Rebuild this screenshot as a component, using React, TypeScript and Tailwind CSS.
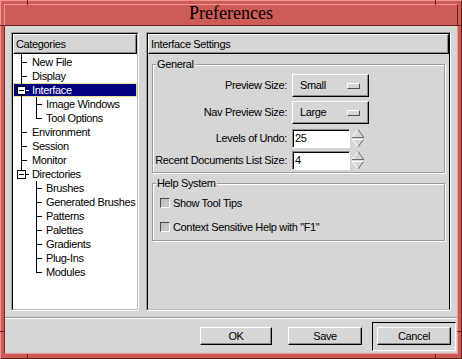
type TreeNode = {
  label: string
  level: 1 | 2
  last?: boolean
  open?: boolean
  selected?: boolean
  under?: boolean
}

const TREE: TreeNode[] = [
  { label: 'New File', level: 1 },
  { label: 'Display', level: 1 },
  { label: 'Interface', level: 1, open: true, selected: true },
  { label: 'Image Windows', level: 2, under: true },
  { label: 'Tool Options', level: 2, under: true, last: true },
  { label: 'Environment', level: 1 },
  { label: 'Session', level: 1 },
  { label: 'Monitor', level: 1 },
  { label: 'Directories', level: 1, open: true, last: true },
  { label: 'Brushes', level: 2 },
  { label: 'Generated Brushes', level: 2 },
  { label: 'Patterns', level: 2 },
  { label: 'Palettes', level: 2 },
  { label: 'Gradients', level: 2 },
  { label: 'Plug-Ins', level: 2 },
  { label: 'Modules', level: 2, last: true },
]

// raised motif-ish bevel
const RAISED =
  'border border-white border-r-black border-b-black shadow-[inset_-1px_-1px_0_#8c8c8c]'

function TreeRow({ n, first }: { n: TreeNode; first: boolean }) {
  return (
    <div
      className={`relative h-[14px] flex items-center whitespace-nowrap ${
        n.level === 1 ? 'pl-[19px]' : 'pl-[33px]'
      } ${
        n.selected
          ? 'bg-[#000080] text-white outline outline-1 -outline-offset-1 outline-[#e9df86]'
          : ''
      }`}
    >
      {n.level === 1 && !n.last && (
        <span
          className={`absolute left-[8px] bottom-0 w-px bg-black ${first ? '-top-px' : 'top-0'}`}
        />
      )}
      {n.level === 1 && n.last && n.open && (
        <span className="absolute left-[8px] top-0 h-[3px] w-px bg-black" />
      )}
      {n.level === 1 && n.open && (
        <>
          <span className="absolute left-[4px] top-[3px] w-[9px] h-[9px] border border-black bg-white">
            <span className="absolute left-[1px] top-[3px] w-[5px] h-px bg-black" />
          </span>
          <span
            className={`absolute left-[13px] top-[7px] w-[3px] h-px ${
              n.selected ? 'bg-white' : 'bg-black'
            }`}
          />
        </>
      )}
      {n.level === 1 && !n.open && (
        <span className="absolute left-[8px] top-[7px] w-[6px] h-px bg-black" />
      )}
      {n.level === 2 && n.under && (
        <span className="absolute left-[8px] top-0 bottom-0 w-px bg-black" />
      )}
      {n.level === 2 && (
        <>
          <span
            className={`absolute left-[23px] top-0 w-px bg-black ${n.last ? 'h-[8px]' : 'bottom-0'}`}
          />
          <span className="absolute left-[23px] top-[7px] w-[6px] h-px bg-black" />
        </>
      )}
      <span>{n.label}</span>
    </div>
  )
}

function PaneHeader({ children }: { children: string }) {
  return (
    <div className={`h-[20px] shrink-0 flex items-center pl-[2px] ${RAISED}`}>
      {children}
    </div>
  )
}

function OptionMenu({ value }: { value: string }) {
  return (
    <div
      className={`w-[77px] h-[23px] flex items-center justify-between pl-[7px] pr-[8px] ${RAISED}`}
    >
      <span>{value}</span>
      <span className="w-[13px] h-[6px] border border-white border-r-[#505050] border-b-[#505050]" />
    </div>
  )
}

function Spinner() {
  return (
    <svg width="12" height="19" viewBox="0 0 12 19" className="block">
      <polygon points="6,0.5 0.5,8 11.5,8" fill="#d6d6d6" />
      <line x1="0.5" y1="8" x2="6" y2="0.5" stroke="#ffffff" />
      <line x1="6" y1="0.5" x2="11.5" y2="8" stroke="#6a6a6a" />
      <line x1="0" y1="8.5" x2="12" y2="8.5" stroke="#6a6a6a" />
      <polygon points="0.5,10.5 11.5,10.5 6,18" fill="#d6d6d6" />
      <line x1="0" y1="10.5" x2="12" y2="10.5" stroke="#ffffff" />
      <line x1="0.5" y1="10.5" x2="6" y2="18" stroke="#ffffff" />
      <line x1="11.5" y1="10.5" x2="6" y2="18" stroke="#6a6a6a" />
    </svg>
  )
}

function SpinEntry({ value }: { value: string }) {
  return (
    <div className="flex items-center gap-[2px]">
      <div className="w-[58px] h-[19px] flex items-center pl-[2px] bg-white border border-[#8a8a8a] border-r-white border-b-white shadow-[inset_1px_1px_0_#000]">
        {value}
      </div>
      <Spinner />
    </div>
  )
}

function Check({ label, className }: { label: string; className?: string }) {
  return (
    <div className={`h-[14px] flex items-center gap-[3px] pl-[7px] ${className ?? ''}`}>
      <span className="w-[10px] h-[10px] bg-[#c4c4c4] border border-[#4a4a4a] border-r-white border-b-white" />
      <span>{label}</span>
    </div>
  )
}

export default function App() {
  return (
    <div className="relative w-[462px] h-[359px] flex flex-col p-[3px] pb-[4px] bg-[#cd5b56] border border-[#f3958f] border-r-[#6a1f1f] border-b-[#6a1f1f] text-black text-[11px] tracking-[-0.35px] font-['Liberation_Sans',Arial,sans-serif]">
      {/* frame corner marks */}
      <span className="absolute left-[26px] -top-px w-px h-[5px] bg-[#6a1f1f]" />
      <span className="absolute left-[434px] -top-px w-px h-[5px] bg-[#6a1f1f]" />
      <span className="absolute left-[26px] -bottom-px w-px h-[5px] bg-[#6a1f1f]" />
      <span className="absolute left-[434px] -bottom-px w-px h-[5px] bg-[#6a1f1f]" />
      <span className="absolute -left-px top-[24px] w-[5px] h-px bg-[#6a1f1f]" />
      <span className="absolute -right-px top-[24px] w-[5px] h-px bg-[#6a1f1f]" />
      <span className="absolute -left-px top-[330px] w-[5px] h-px bg-[#6a1f1f]" />
      <span className="absolute -right-px top-[330px] w-[5px] h-px bg-[#6a1f1f]" />

      {/* title bar */}
      <div className="h-[22px] shrink-0 flex items-center justify-center pb-[4px] border border-[#f3958f] border-r-[#6a1f1f] border-b-[#6a1f1f] text-[18px] tracking-normal font-['Liberation_Serif','Times_New_Roman',serif]">
        Preferences
      </div>

      {/* dialog body */}
      <div className="flex-1 flex flex-col bg-[#d6d6d6] border-l border-r border-b border-l-[#7a2626] border-r-[#f3958f] border-b-[#f3958f]">
        <div className="h-[279px] mt-[6px] mx-[6px] flex gap-[7px]">
          {/* categories */}
          <div className="w-[128px] flex flex-col border border-[#9a9a9a] border-r-white border-b-white">
            <div className="flex-1 flex flex-col border border-black border-r-[#bcbcbc] border-b-[#bcbcbc]">
              <PaneHeader>Categories</PaneHeader>
              <div className="flex-1 bg-white pt-[1px]">
                {TREE.map((n, i) => (
                  <TreeRow key={n.label} n={n} first={i === 0} />
                ))}
              </div>
            </div>
          </div>

          {/* settings */}
          <div className="flex-1 flex flex-col border border-[#9a9a9a] border-r-white border-b-white">
            <div className="flex-1 flex flex-col border border-black border-b-[#bcbcbc]">
              <PaneHeader>Interface Settings</PaneHeader>
              <div className="flex-1 px-[4px] pt-[3px]">
                <fieldset className="border border-[#9c9c9c] shadow-[inset_1px_1px_0_#fff,1px_1px_0_#fff] pb-[2px]">
                  <legend className="ml-[3px] px-[1px] leading-[14px] bg-[#d6d6d6]">General</legend>
                  <div className="flex items-center mt-[3px] h-[23px]">
                    <span className="w-[139px] pr-[5px] text-right">Preview Size:</span>
                    <OptionMenu value="Small" />
                  </div>
                  <div className="flex items-center mt-[4px] h-[23px]">
                    <span className="w-[139px] pr-[5px] text-right">Nav Preview Size:</span>
                    <OptionMenu value="Large" />
                  </div>
                  <div className="flex items-center mt-[5px] h-[19px]">
                    <span className="w-[139px] pr-[5px] text-right">Levels of Undo:</span>
                    <SpinEntry value="25" />
                  </div>
                  <div className="flex items-center mt-[3px] h-[19px]">
                    <span className="w-[139px] pr-[5px] text-right whitespace-nowrap">
                      Recent Documents List Size:
                    </span>
                    <SpinEntry value="4" />
                  </div>
                </fieldset>

                <fieldset className="mt-[3px] border border-[#9c9c9c] shadow-[inset_1px_1px_0_#fff,1px_1px_0_#fff] pb-[6px]">
                  <legend className="ml-[3px] px-[1px] leading-[14px] bg-[#d6d6d6]">Help System</legend>
                  <Check label="Show Tool Tips" className="mt-[6px]" />
                  <Check label={'Context Sensitive Help with "F1"'} className="mt-[10px]" />
                </fieldset>
              </div>
            </div>
          </div>
        </div>

        {/* separator */}
        <div className="mt-[6px] h-[2px] border-t border-b border-t-[#9a9a9a] border-b-white" />

        {/* buttons */}
        <div className="flex-1 flex items-center justify-end pr-[1px]">
          <div className={`w-[72px] h-[18px] flex items-center justify-center ${RAISED}`}>OK</div>
          <div className={`ml-[16px] w-[74px] h-[18px] flex items-center justify-center ${RAISED}`}>
            Save
          </div>
          <div className="ml-[10px] w-[84px] h-[29px] flex items-center justify-center border border-black border-r-white border-b-white">
            <div className={`w-[74px] h-[18px] flex items-center justify-center ${RAISED}`}>
              Cancel
            </div>
          </div>
        </div>
      </div>
    </div>
  )
}
